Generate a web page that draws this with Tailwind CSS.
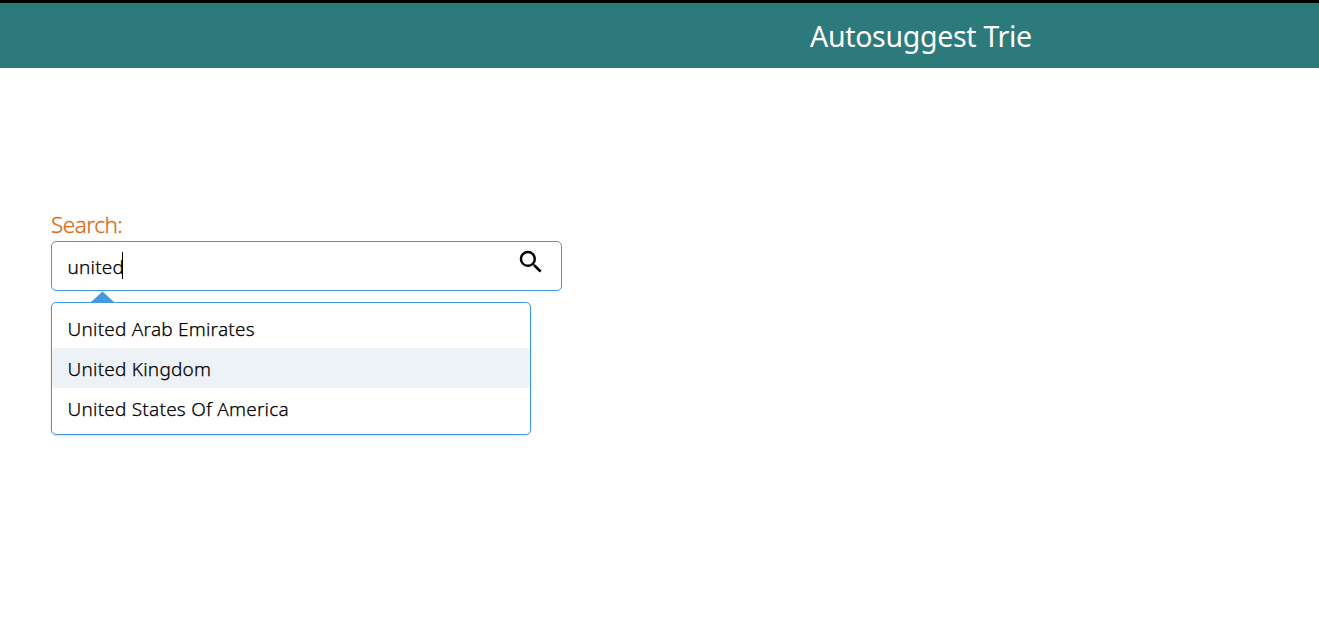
<!DOCTYPE html>
<html lang="en">
<head>
<meta charset="utf-8">
<title>Autosuggest Trie</title>
<script src="https://cdn.jsdelivr.net/npm/@tailwindcss/browser@4"></script>
</head>
<body class="bg-white h-screen overflow-hidden font-['Noto_Sans',sans-serif] text-black">
<header class="h-[68px] border-t-[3px] border-black bg-[#2c7a7b] flex items-center pl-[810px]">
<h1 class="pt-[2px] text-[28.5px] leading-none tracking-[-0.31px] text-white whitespace-nowrap">Autosuggest Trie</h1>
</header>
<main class="pt-[143px] pl-[51px]">
<div class="h-[30px] pb-[2px] flex items-center text-[22.5px] font-light [-webkit-text-stroke:0.3px] leading-none tracking-[-0.5px] text-[#dd6b20]">Search:</div>
<div class="w-[511px] h-[50px] border border-[#4299e1] rounded-[5px] flex justify-between pl-[15.5px] pr-[15px]">
<div class="flex items-center text-[19px] font-light [-webkit-text-stroke:0.25px] tracking-[0.2px]"><span class="pt-[2px]">united</span><span class="-ml-[2px] w-px h-[27px] mb-[2px] bg-black"></span></div>
<svg class="w-[30px] h-[30px] mt-[5px]" viewBox="0 0 24 24"><path d="M15.5 14h-.79l-.28-.27A6.471 6.471 0 0 0 16 9.5 6.5 6.5 0 1 0 9.5 16c1.61 0 3.09-.59 4.23-1.57l.27.28v.79l5 4.99L20.49 19l-4.99-5zm-6 0C7.01 14 5 11.99 5 9.5S7.01 5 9.5 5 14 7.01 14 9.5 11.99 14 9.5 14z"/></svg>
</div>
<svg class="block ml-10 w-[23px] h-[11px]" viewBox="0 0 23 11"><path d="M11.5 0.5L23 11H0z" fill="#4299e1"/></svg>
<ul class="w-[480px] h-[133px] border border-[#4299e1] rounded-[5px] pt-[5px] shadow-sm text-[19px] font-light [-webkit-text-stroke:0.25px] tracking-[0.22px]">
<li class="h-10 pt-[2px] pl-[15.5px] flex items-center">United Arab Emirates</li>
<li class="h-10 pt-[2px] pl-[15.5px] flex items-center bg-[#edf2f7] rounded">United Kingdom</li>
<li class="h-10 pt-[2px] pl-[15.5px] flex items-center">United States Of America</li>
</ul>
</main>
</body>
</html>
